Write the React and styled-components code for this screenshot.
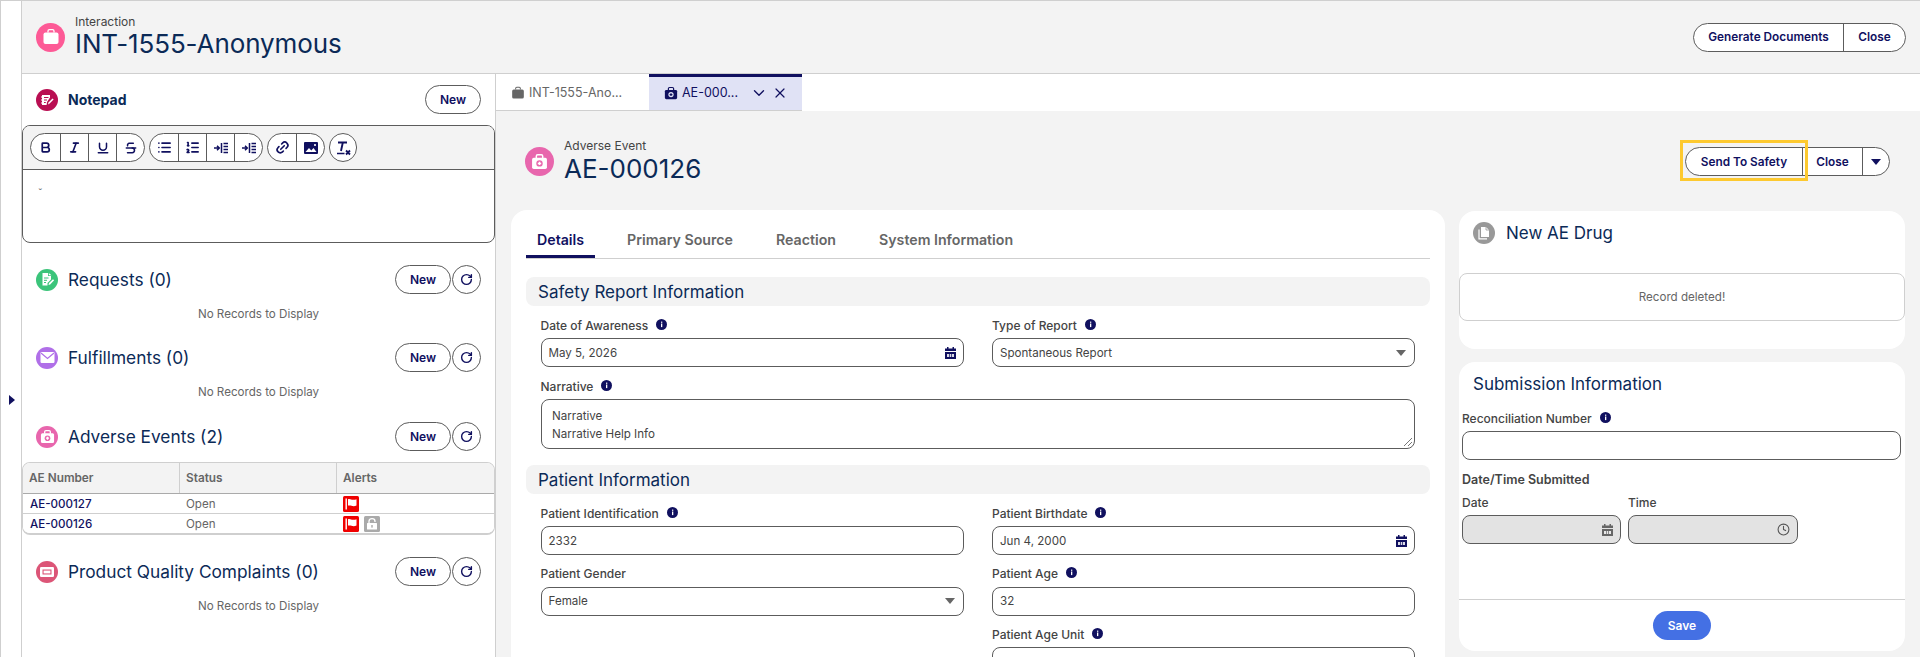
import React from "react";
import styled, { createGlobalStyle } from "styled-components";
import {
  Bold, Italic, Underline, Strikethrough, List, ListOrdered, Link2, RotateCw,
  ChevronDown, X, Clock,
} from "lucide-react";

const NAVY = "#10105f";
const INK = "#0b2a57";
const LINE = "#cfcfcf";
const EDGE = "#5c5c5c";

const Global = createGlobalStyle`
  html, body { margin: 0; padding: 0; background: #fff; }
  body { font-family: Inter, "Liberation Sans", sans-serif; color: #444; overflow: hidden; }
  * { box-sizing: border-box; }
`;

const Page = styled.div`
  display: flex; width: 1920px; height: 657px; overflow: hidden;
  border-top: 1px solid ${LINE};
`;
const Rail = styled.div`
  width: 22px; flex: none; padding: 394px 0 0 8px;
  border-left: 1px solid ${LINE}; border-right: 1px solid ${LINE};
`;
const RailArrow = styled.div`
  width: 0; height: 0; border-style: solid;
  border-width: 5px 0 5px 6px; border-color: transparent transparent transparent ${NAVY};
`;
const Main = styled.div`flex: 1; display: flex; flex-direction: column; min-width: 0;`;
const TopBar = styled.header`
  height: 73px; flex: none; display: flex; align-items: center; justify-content: space-between;
  padding: 0 14px 0 14px; background: #f3f3f3; border-bottom: 1px solid ${LINE};
`;
const TitleWrap = styled.div`display: flex; align-items: center; gap: 10px;`;
const TitleStack = styled.div`display: flex; flex-direction: column;`;
const Eyebrow = styled.div`font-size: 12px; line-height: 14px; color: #444;`;
const BigTitle = styled.div`
  font-size: 26px; line-height: 31px; color: ${INK};
  letter-spacing: ${p => p.$ls || 0}px; margin-top: ${p => p.$up ? -1 : 0}px;
`;
const Circle = styled.span`
  flex: none; display: inline-flex; align-items: center; justify-content: center;
  width: ${p => p.$size}px; height: ${p => p.$size}px; border-radius: 50%; background: ${p => p.$bg};
`;
const Pills = styled.div`
  display: inline-flex; height: 29px; border: 1px solid ${EDGE}; border-radius: 15px; background: #fff;
`;
const Pill = styled.button`
  height: 100%; border: 0; background: transparent; padding: 0;
  width: ${p => p.$w}px;
  font: 600 11.8px Inter, sans-serif; color: ${NAVY};
  display: inline-flex; align-items: center; justify-content: center;
  & + & { border-left: 1px solid ${EDGE}; }
`;
const Body = styled.div`flex: 1; display: flex; min-height: 0;`;
const Left = styled.aside`
  width: 474px; flex: none; padding-top: 11px; border-right: 1px solid ${LINE}; background: #fff;
`;
const Row = styled.div`
  display: flex; align-items: center; padding: 0 14px; height: 29px;
`;
const RowTitle = styled.div`
  flex: 1; margin-left: 10px; color: ${INK};
  font-size: ${p => p.$bold ? 14 : 17.3}px; font-weight: ${p => p.$bold ? 700 : 400};
`;
const RoundNew = styled.button`
  width: ${p => p.$w}px; height: 29px; border: 1px solid ${EDGE}; border-radius: 15px; background: #fff;
  font: 600 12px Inter, sans-serif; color: ${NAVY}; padding: 0;
`;
const RoundIcon = styled.button`
  width: 29px; height: 29px; margin-left: 1px; border: 1px solid ${EDGE}; border-radius: 50%; background: #fff;
  display: inline-flex; align-items: center; justify-content: center; padding: 0; color: ${NAVY};
`;
const Editor = styled.div`
  margin-top: 11px; height: 118px; border: 1px solid ${EDGE}; border-radius: 8px; overflow: hidden;
`;
const Toolbar = styled.div`
  height: 44px; display: flex; gap: 4px; padding: 7px 7px; background: #f3f3f3; border-bottom: 1px solid ${EDGE};
`;
const ToolGroup = styled.div`
  display: flex; height: 29px; border: 1px solid ${EDGE}; border-radius: 15px; background: #fff; overflow: hidden;
`;
const ToolBtn = styled.span`
  width: ${p => p.$w || 28}px; display: flex; align-items: center; justify-content: center; color: ${NAVY};
  & + & { border-left: 1px solid ${EDGE}; }
`;
const EditorBody = styled.div`padding: 16px 0 0 15px; font-size: 11px; line-height: 14px; color: #666;`;
const ListBlock = styled.section`margin-top: ${p => p.$top ?? 22}px;`;
const Empty = styled.div`
  margin-top: 12px; height: 16px; line-height: 16px; text-align: center; font-size: 11.6px; color: #666;
`;
const Table = styled.div`
  margin-top: 11px; height: 73px; border: 1px solid ${LINE}; border-bottom-width: 2px; border-radius: 8px; overflow: hidden;
`;
const TRow = styled.div`
  display: grid; grid-template-columns: 156px 157px 1fr; align-items: center;
  height: ${p => p.$head ? 31 : 20}px;
  background: ${p => p.$head ? "#f3f3f3" : "#fff"};
  border-bottom: ${p => p.$last ? 0 : 1}px solid ${LINE};
  ${p => p.$head && `border-bottom: 1px solid #aaa;`}
`;
const Th = styled.div`
  height: 100%; display: flex; align-items: center; padding-left: 6px; font-size: 11.8px; font-weight: 600; color: #666;
  & + & { border-left: 1px solid ${LINE}; }
`;
const Td = styled.div`
  display: flex; align-items: center; gap: 5px; padding-left: 7px; font-size: 11.6px; color: ${p => p.$link ? NAVY : "#666"};
  font-weight: ${p => p.$link ? 500 : 400};
`;
const Right = styled.main`flex: 1; min-width: 0; display: flex; flex-direction: column; background: #f3f3f3;`;
const TabStrip = styled.div`
  height: 37px; flex: none; display: flex; background: #fff;
`;
const FileTab = styled.div`
  display: flex; align-items: center; gap: 4px; width: ${p => p.$w}px; padding: 0 0 2px 15px;
  font-size: 12.5px; color: ${p => p.$on ? NAVY : "#666"};
  background: ${p => p.$on ? "#e0e2f5" : "#fff"};
  border-top: 3px solid ${p => p.$on ? NAVY : "transparent"};
  border-bottom: 1px solid ${LINE};
`;
const TabText = styled.span`flex: ${p => p.$grow ? 1 : "none"}; white-space: nowrap;`;
const RecHead = styled.div`
  height: 99px; flex: none; display: flex; align-items: flex-start; justify-content: space-between; padding: 28px 30px 0 29px;
`;
const Actions = styled.div`position: relative; display: flex; margin-top: 8px;`;
const Highlight = styled.div`
  position: absolute; left: -5px; top: -7px; width: 128px; height: 41px; border: 3px solid #fdc92f; pointer-events: none;
`;
const Columns = styled.div`flex: 1; display: flex; gap: 14px; padding: 0 15px; min-height: 0;`;
const Card = styled.div`
  width: 934px; flex: none; background: #fff; border-radius: 16px 16px 0 0; padding: 0 15px; overflow: hidden;
`;
const Tabs = styled.div`display: flex; height: 49px; gap: 43px; border-bottom: 1px solid ${LINE};`;
const TabItem = styled.div`
  height: 48px; display: flex; align-items: center; padding: 13px ${p => p.$on ? 11 : 0}px 0;
  font-size: 14.2px; font-weight: 600; color: ${p => p.$on ? NAVY : "#666"};
  border-bottom: 3px solid ${p => p.$on ? NAVY : "transparent"};
  margin-right: ${p => p.$on ? -11 : 0}px;
`;
const SectionBar = styled.div`
  height: 29px; margin-top: ${p => p.$top}px; border-radius: 8px; background: #f3f3f3; padding-left: 12px;
  display: flex; align-items: center; font-size: 17px; color: ${INK};
`;
const Grid = styled.div`
  display: grid; grid-template-columns: 423.5px 423px; column-gap: 28px; row-gap: ${p => p.$gap}px; padding: 12px 15px 0 14.5px;
`;
const Field = styled.div`grid-column: ${p => p.$wide ? "1 / -1" : "auto"};`;
const Label = styled.div`
  height: 16px; margin-bottom: 4px; padding-bottom: 2px; display: flex; align-items: center; gap: 8px; font-size: 12px; font-weight: 500; color: #444;
  svg { margin-top: -2px; }
`;
const Input = styled.div`
  height: 29px; border: 1px solid ${EDGE}; border-radius: 8px; padding: 0 7px; display: flex; align-items: center; justify-content: space-between;
  font-size: 11.6px; color: #444; background: ${p => p.$off ? "#e3e3e3" : "#fff"};
`;
const TextArea = styled.div`
  position: relative; height: 50px; border: 1px solid ${EDGE}; border-radius: 8px; padding: 7px 10.5px; font-size: 11.6px; line-height: 18px; color: #444;
`;
const Grip = styled.svg`position: absolute; right: 1px; bottom: 1px;`;
const Caret = styled.span`
  width: 0; height: 0; border-style: solid; border-width: 6px 5px 0 5px; border-color: ${p => p.$c || "#666"} transparent transparent; margin-right: ${p => p.$flush ? 0 : 1}px;
`;
const Side = styled.div`width: 446px; flex: none; display: flex; flex-direction: column; gap: 13px; padding-top: 1px;`;
const DrugCard = styled.div`height: 138px; flex: none; background: #fff; border-radius: 16px;`;
const DrugHead = styled.div`height: 62px; display: flex; align-items: center; gap: 11px; padding: 0 14px 18px;`;
const SideTitle = styled.div`font-size: 17px; color: ${INK};`;
const Notice = styled.div`
  height: 48px; border: 1px solid ${LINE}; border-radius: 8px; display: flex; align-items: center; justify-content: center; font-size: 11.6px; color: #666;
`;
const SubCard = styled.div`height: 289px; flex: none; background: #fff; border-radius: 16px; display: flex; flex-direction: column;`;
const SubBody = styled.div`flex: 1; padding: 0 4px 0 3px;`;
const SubTitle = styled(SideTitle)`padding: 11px 0 0 14px; line-height: 22px;`;
const SubField = styled.div`margin-top: ${p => p.$top}px;`;
const GroupLabel = styled.div`margin-top: 10px; height: 20px; line-height: 20px; font-size: 12.5px; font-weight: 600; color: #444;`;
const Pair = styled.div`display: flex; gap: 7px; margin-top: 5px;`;
const PairCol = styled.div`width: ${p => p.$w}px;`;
const Foot = styled.div`height: 52px; border-top: 1px solid ${LINE}; display: flex; justify-content: center; padding-top: 11px;`;
const Save = styled.button`
  width: 58px; height: 29px; border: 0; border-radius: 15px; background: #4470e4; color: #fff; font: 600 12px Inter, sans-serif; padding: 0;
`;

const Info = () => (
  <svg width="11" height="11" viewBox="0 0 11 11">
    <circle cx="5.5" cy="5.5" r="5.5" fill={NAVY} />
    <rect x="5" y="4.5" width="1.3" height="3.6" fill="#fff" />
    <rect x="5" y="2.6" width="1.3" height="1.2" fill="#fff" />
  </svg>
);
const Cal = ({ c = NAVY }) => (
  <svg width="11" height="12" viewBox="0 0 11 12">
    <rect x="2" y="0" width="1.5" height="2" fill={c} />
    <rect x="7.5" y="0" width="1.5" height="2" fill={c} />
    <rect x="0" y="1.5" width="11" height="2.5" fill={c} />
    <path d="M0 5h11v7H0z" fill={c} />
    <path d="M2 7h2v3H2zM4.700 7h1.600v3H4.700zM7 7h2v3H7z" fill="#fff" opacity=".85" />
  </svg>
);
const Bag = ({ c = "#fff", hole = "#e866ad", s = 16 }) => (
  <svg width={s} height={s} viewBox="0 0 16 16">
    <path d="M5 5V3c0-.7.6-1.300 1.300-1.300h3.400c.7 0 1.300.6 1.300 1.300v2" fill="none" stroke={c} strokeWidth="1.400" />
    <rect x="1" y="4.500" width="14" height="10.500" rx="1.600" fill={c} />
    <circle cx="8" cy="9.800" r="3" fill={hole} />
    <path d="M7.300 8.200h1.400v.9h.9v1.400h-.9v.9H7.300v-.9h-.9V9.100h.9z" fill={c} />
  </svg>
);
const Brief = ({ c = "#fff", s = 18 }) => (
  <svg width={s} height={s} viewBox="0 0 18 18">
    <path d="M6 4.500V3c0-.8.6-1.400 1.400-1.400h3.200c.8 0 1.400.6 1.400 1.400v1.500" fill="none" stroke={c} strokeWidth="1.300" />
    <rect x="1.500" y="4.500" width="15" height="11.500" rx="2" fill={c} />
  </svg>
);
const NoteGlyph = () => (
  <svg width="15" height="14" viewBox="0 0 15 14">
    <path d="M2 2h8v2.500L7 9l-.4 3H2z" fill="#fff" />
    <path d="M1 4h2M1 7h2M1 10h2" stroke="#fff" strokeWidth="1" />
    <path d="M4 4.500h4.500M4 7h3M4 9.500h1.800" stroke="#b90e52" strokeWidth="1" />
    <path d="M8 11.500l.5-2L12.500 5.500l1.100 1.100-4 4z" fill="#fff" />
  </svg>
);
const ReqGlyph = () => (
  <svg width="15" height="15" viewBox="0 0 15 15">
    <path d="M2.500 1h5.500v3h3v3.500L7.500 11v2.500h-5z" fill="#fff" />
    <path d="M8.800 1l2.700 2.300H8.800z" fill="#fff" />
    <path d="M4 6h4.500M4 8.300h3M4 10.500h2" stroke="#3bc47a" strokeWidth="1" />
    <path d="M8.500 13l.5-2L13 7.200l1.100 1.100-3.900 4.200z" fill="#fff" />
  </svg>
);
const Mail = () => (
  <svg width="15" height="11" viewBox="0 0 15 11">
    <rect x="0.500" y="0" width="14" height="11" rx="1.200" fill="#fff" />
    <path d="M1 1L7.500 6.500 14 1" fill="none" stroke="#b06fe8" strokeWidth="1.200" />
  </svg>
);
const Ticket = () => (
  <svg width="14" height="10" viewBox="0 0 14 10">
    <rect x="0" y="0" width="14" height="10" rx="1.200" fill="#fff" />
    <rect x="2.500" y="2.500" width="9" height="5" fill="#dc5577" />
    <rect x="3.600" y="3.600" width="6.800" height="2.800" fill="#fff" />
  </svg>
);
const Docs = () => (
  <svg width="14" height="14" viewBox="0 0 14 14">
    <path d="M2 3.500v9.400h8" fill="none" stroke="#fff" strokeWidth="1.200" />
    <path d="M4 1h5l3 3v7H4z" fill="#fff" />
    <path d="M9 1v3h3" fill="none" stroke="#999" strokeWidth=".8" />
  </svg>
);
const Flag = () => (
  <svg width="16" height="16" viewBox="0 0 16 16">
    <rect width="16" height="16" rx="1.500" fill="#f00000" />
    <rect x="2.500" y="2.500" width="1.400" height="11" fill="#fff" />
    <path d="M5 3.200c2.500-.8 3.500 1 5.500.6 1 0 2-.3 3-.6v6.400c-2 .9-3.600.8-5 .2-1.300-.5-2.300-.5-3.500-.2z" fill="#fff" />
  </svg>
);
const Lock = () => (
  <svg width="16" height="16" viewBox="0 0 16 16">
    <rect width="16" height="16" rx="1.500" fill="#aaa" />
    <path d="M5 7V5.200C5 3.500 6.300 2.600 8 2.600s3 .9 3 2.600V6" fill="none" stroke="#fff" strokeWidth="1.300" />
    <rect x="3" y="7" width="10" height="6.500" rx=".6" fill="#fff" />
    <rect x="7.300" y="9" width="1.400" height="2.600" fill="#aaa" />
  </svg>
);
const IndentGlyph = () => (
  <svg width="15" height="14" viewBox="0 0 15 14" fill="none" stroke={NAVY}>
    <path d="M1 7h5M4 4.800L6.300 7 4 9.200" strokeWidth="1.500" />
    <path d="M8.500 2v10" strokeWidth="1.500" />
    <path d="M10.500 2.500H15M10.500 5.500H15M10.500 8.500H15M10.500 11.500H15" strokeWidth="1.300" />
  </svg>
);
const ImageGlyph = () => (
  <svg width="14" height="12" viewBox="0 0 14 12">
    <rect width="14" height="12" rx="1" fill={NAVY} />
    <path d="M1.500 10l3.500-4 2.300 2.500L9.500 6 12.500 10z" fill="#fff" />
    <circle cx="11" cy="3" r="1.100" fill="#fff" />
  </svg>
);
const ClearGlyph = () => (
  <svg width="16" height="16" viewBox="0 0 16 16" fill="none" stroke={NAVY}>
    <path d="M3 2.500h9" strokeWidth="1.800" />
    <path d="M7.800 2.500L6 11" strokeWidth="1.900" />
    <path d="M2 13.500h7.500" strokeWidth="1.500" />
    <path d="M11 10.500l4 4M15 10.500l-4 4" strokeWidth="1.800" />
  </svg>
);

const ic = { size: 15, strokeWidth: 2.6 };

function ListHead({ icon, bg, title }) {
  return (
    <Row>
      <Circle $size={22} $bg={bg}>{icon}</Circle>
      <RowTitle>{title}</RowTitle>
      <RoundNew $w={56}>New</RoundNew>
      <RoundIcon><RotateCw size={13} strokeWidth={2.6} /></RoundIcon>
    </Row>
  );
}

function LabeledInput({ label, value, info = true, trailing }) {
  return (
    <Field>
      <Label>{label}{info && <Info />}</Label>
      <Input>{value}{trailing}</Input>
    </Field>
  );
}

export default function App() {
  return (
    <>
      <Global />
      <Page>
        <Rail><RailArrow /></Rail>
        <Main>
          <TopBar>
            <TitleWrap>
              <Circle $size={29} $bg="#fd5a96"><Brief /></Circle>
              <TitleStack>
                <Eyebrow>Interaction</Eyebrow>
                <BigTitle $ls={-0.1} $up>INT-1555-Anonymous</BigTitle>
              </TitleStack>
            </TitleWrap>
            <Pills>
              <Pill $w={149}>Generate Documents</Pill>
              <Pill $w={62}>Close</Pill>
            </Pills>
          </TopBar>
          <Body>
            <Left>
              <Row>
                <Circle $size={22} $bg="#b90e52"><NoteGlyph /></Circle>
                <RowTitle $bold>Notepad</RowTitle>
                <RoundNew $w={56}>New</RoundNew>
              </Row>
              <Editor>
                <Toolbar>
                  <ToolGroup>
                    <ToolBtn $w={29}><Bold {...ic} size={13} strokeWidth={3.2} /></ToolBtn>
                    <ToolBtn><Italic {...ic} size={13} strokeWidth={3} /></ToolBtn>
                    <ToolBtn><Underline {...ic} size={14} /></ToolBtn>
                    <ToolBtn><Strikethrough {...ic} size={14} /></ToolBtn>
                  </ToolGroup>
                  <ToolGroup>
                    <ToolBtn><List {...ic} /></ToolBtn>
                    <ToolBtn><ListOrdered {...ic} /></ToolBtn>
                    <ToolBtn><IndentGlyph /></ToolBtn>
                    <ToolBtn><IndentGlyph /></ToolBtn>
                  </ToolGroup>
                  <ToolGroup>
                    <ToolBtn><Link2 {...ic} style={{ transform: "rotate(-45deg)" }} /></ToolBtn>
                    <ToolBtn><ImageGlyph /></ToolBtn>
                  </ToolGroup>
                  <ToolGroup>
                    <ToolBtn $w={26}><ClearGlyph /></ToolBtn>
                  </ToolGroup>
                </Toolbar>
                <EditorBody>ˇ</EditorBody>
              </Editor>

              <ListBlock>
                <ListHead title="Requests (0)" bg="#3bc47a" icon={<ReqGlyph />} />
                <Empty>No Records to Display</Empty>
              </ListBlock>
              <ListBlock $top={21}>
                <ListHead title="Fulfillments (0)" bg="#b06fe8" icon={<Mail />} />
                <Empty>No Records to Display</Empty>
              </ListBlock>
              <ListBlock>
                <ListHead title="Adverse Events (2)" bg="#e866ad" icon={<Bag s={15} />} />
                <Table>
                  <TRow $head><Th>AE Number</Th><Th>Status</Th><Th>Alerts</Th></TRow>
                  <TRow><Td $link>AE-000127</Td><Td>Open</Td><Td><Flag /></Td></TRow>
                  <TRow $last><Td $link>AE-000126</Td><Td>Open</Td><Td><Flag /><Lock /></Td></TRow>
                </Table>
              </ListBlock>
              <ListBlock>
                <ListHead title="Product Quality Complaints (0)" bg="#dc5577" icon={<Ticket />} />
                <Empty>No Records to Display</Empty>
              </ListBlock>
            </Left>
            <Right>
              <TabStrip>
                <FileTab $w={153}>
                  <Brief c="#666" s={14} />
                  <TabText>INT-1555-Ano...</TabText>
                </FileTab>
                <FileTab $w={153} $on>
                  <Bag c={NAVY} hole="#e0e2f5" s={14} />
                  <TabText $grow>AE-000...</TabText>
                  <ChevronDown size={18} strokeWidth={1.8} />
                  <X size={16} strokeWidth={1.8} style={{ marginRight: 14 }} />
                </FileTab>
              </TabStrip>
              <RecHead>
                <TitleWrap>
                  <Circle $size={29} $bg="#e866ad"><Bag s={17} /></Circle>
                  <TitleStack>
                    <Eyebrow>Adverse Event</Eyebrow>
                    <BigTitle>AE-000126</BigTitle>
                  </TitleStack>
                </TitleWrap>
                <Actions>
                  <Pills>
                    <Pill $w={116}>Send To Safety</Pill>
                    <Pill $w={60}>Close</Pill>
                    <Pill $w={27}><Caret $c={NAVY} $flush /></Pill>
                  </Pills>
                  <Highlight />
                </Actions>
              </RecHead>
              <Columns>
                <Card>
                  <Tabs>
                    <TabItem $on>Details</TabItem>
                    <TabItem>Primary Source</TabItem>
                    <TabItem>Reaction</TabItem>
                    <TabItem>System Information</TabItem>
                  </Tabs>
                  <SectionBar $top={18}>Safety Report Information</SectionBar>
                  <Grid $gap={12}>
                    <LabeledInput label="Date of Awareness" value="May 5, 2026" trailing={<Cal />} />
                    <LabeledInput label="Type of Report" value="Spontaneous Report" trailing={<Caret />} />
                    <Field $wide>
                      <Label>Narrative<Info /></Label>
                      <TextArea>
                        Narrative<br />Narrative Help Info
                        <Grip width="10" height="10" viewBox="0 0 10 10" fill="none" stroke="#777">
                          <path d="M1 9L9 1M5 9L9 5" />
                        </Grip>
                      </TextArea>
                    </Field>
                  </Grid>
                  <SectionBar $top={16}>Patient Information</SectionBar>
                  <Grid $gap={11.5}>
                    <LabeledInput label="Patient Identification" value="2332" />
                    <LabeledInput label="Patient Birthdate" value="Jun 4, 2000" trailing={<Cal />} />
                    <LabeledInput label="Patient Gender" value="Female" info={false} trailing={<Caret />} />
                    <LabeledInput label="Patient Age" value="32" />
                    <div />
                    <LabeledInput label="Patient Age Unit" value="" />
                  </Grid>
                </Card>
                <Side>
                  <DrugCard>
                    <DrugHead>
                      <Circle $size={22} $bg="#999"><Docs /></Circle>
                      <SideTitle>New AE Drug</SideTitle>
                    </DrugHead>
                    <Notice>Record deleted!</Notice>
                  </DrugCard>
                  <SubCard>
                    <SubTitle>Submission Information</SubTitle>
                    <SubBody>
                      <SubField $top={16}>
                        <Label>Reconciliation Number<Info /></Label>
                        <Input />
                      </SubField>
                      <GroupLabel>Date/Time Submitted</GroupLabel>
                      <Pair>
                        <PairCol $w={159}>
                          <Label>Date</Label>
                          <Input $off><span /><Cal c="#666" /></Input>
                        </PairCol>
                        <PairCol $w={170}>
                          <Label>Time</Label>
                          <Input $off><span /><Clock size={13} strokeWidth={2} color="#555" /></Input>
                        </PairCol>
                      </Pair>
                    </SubBody>
                    <Foot><Save>Save</Save></Foot>
                  </SubCard>
                </Side>
              </Columns>
            </Right>
          </Body>
        </Main>
      </Page>
    </>
  );
}
